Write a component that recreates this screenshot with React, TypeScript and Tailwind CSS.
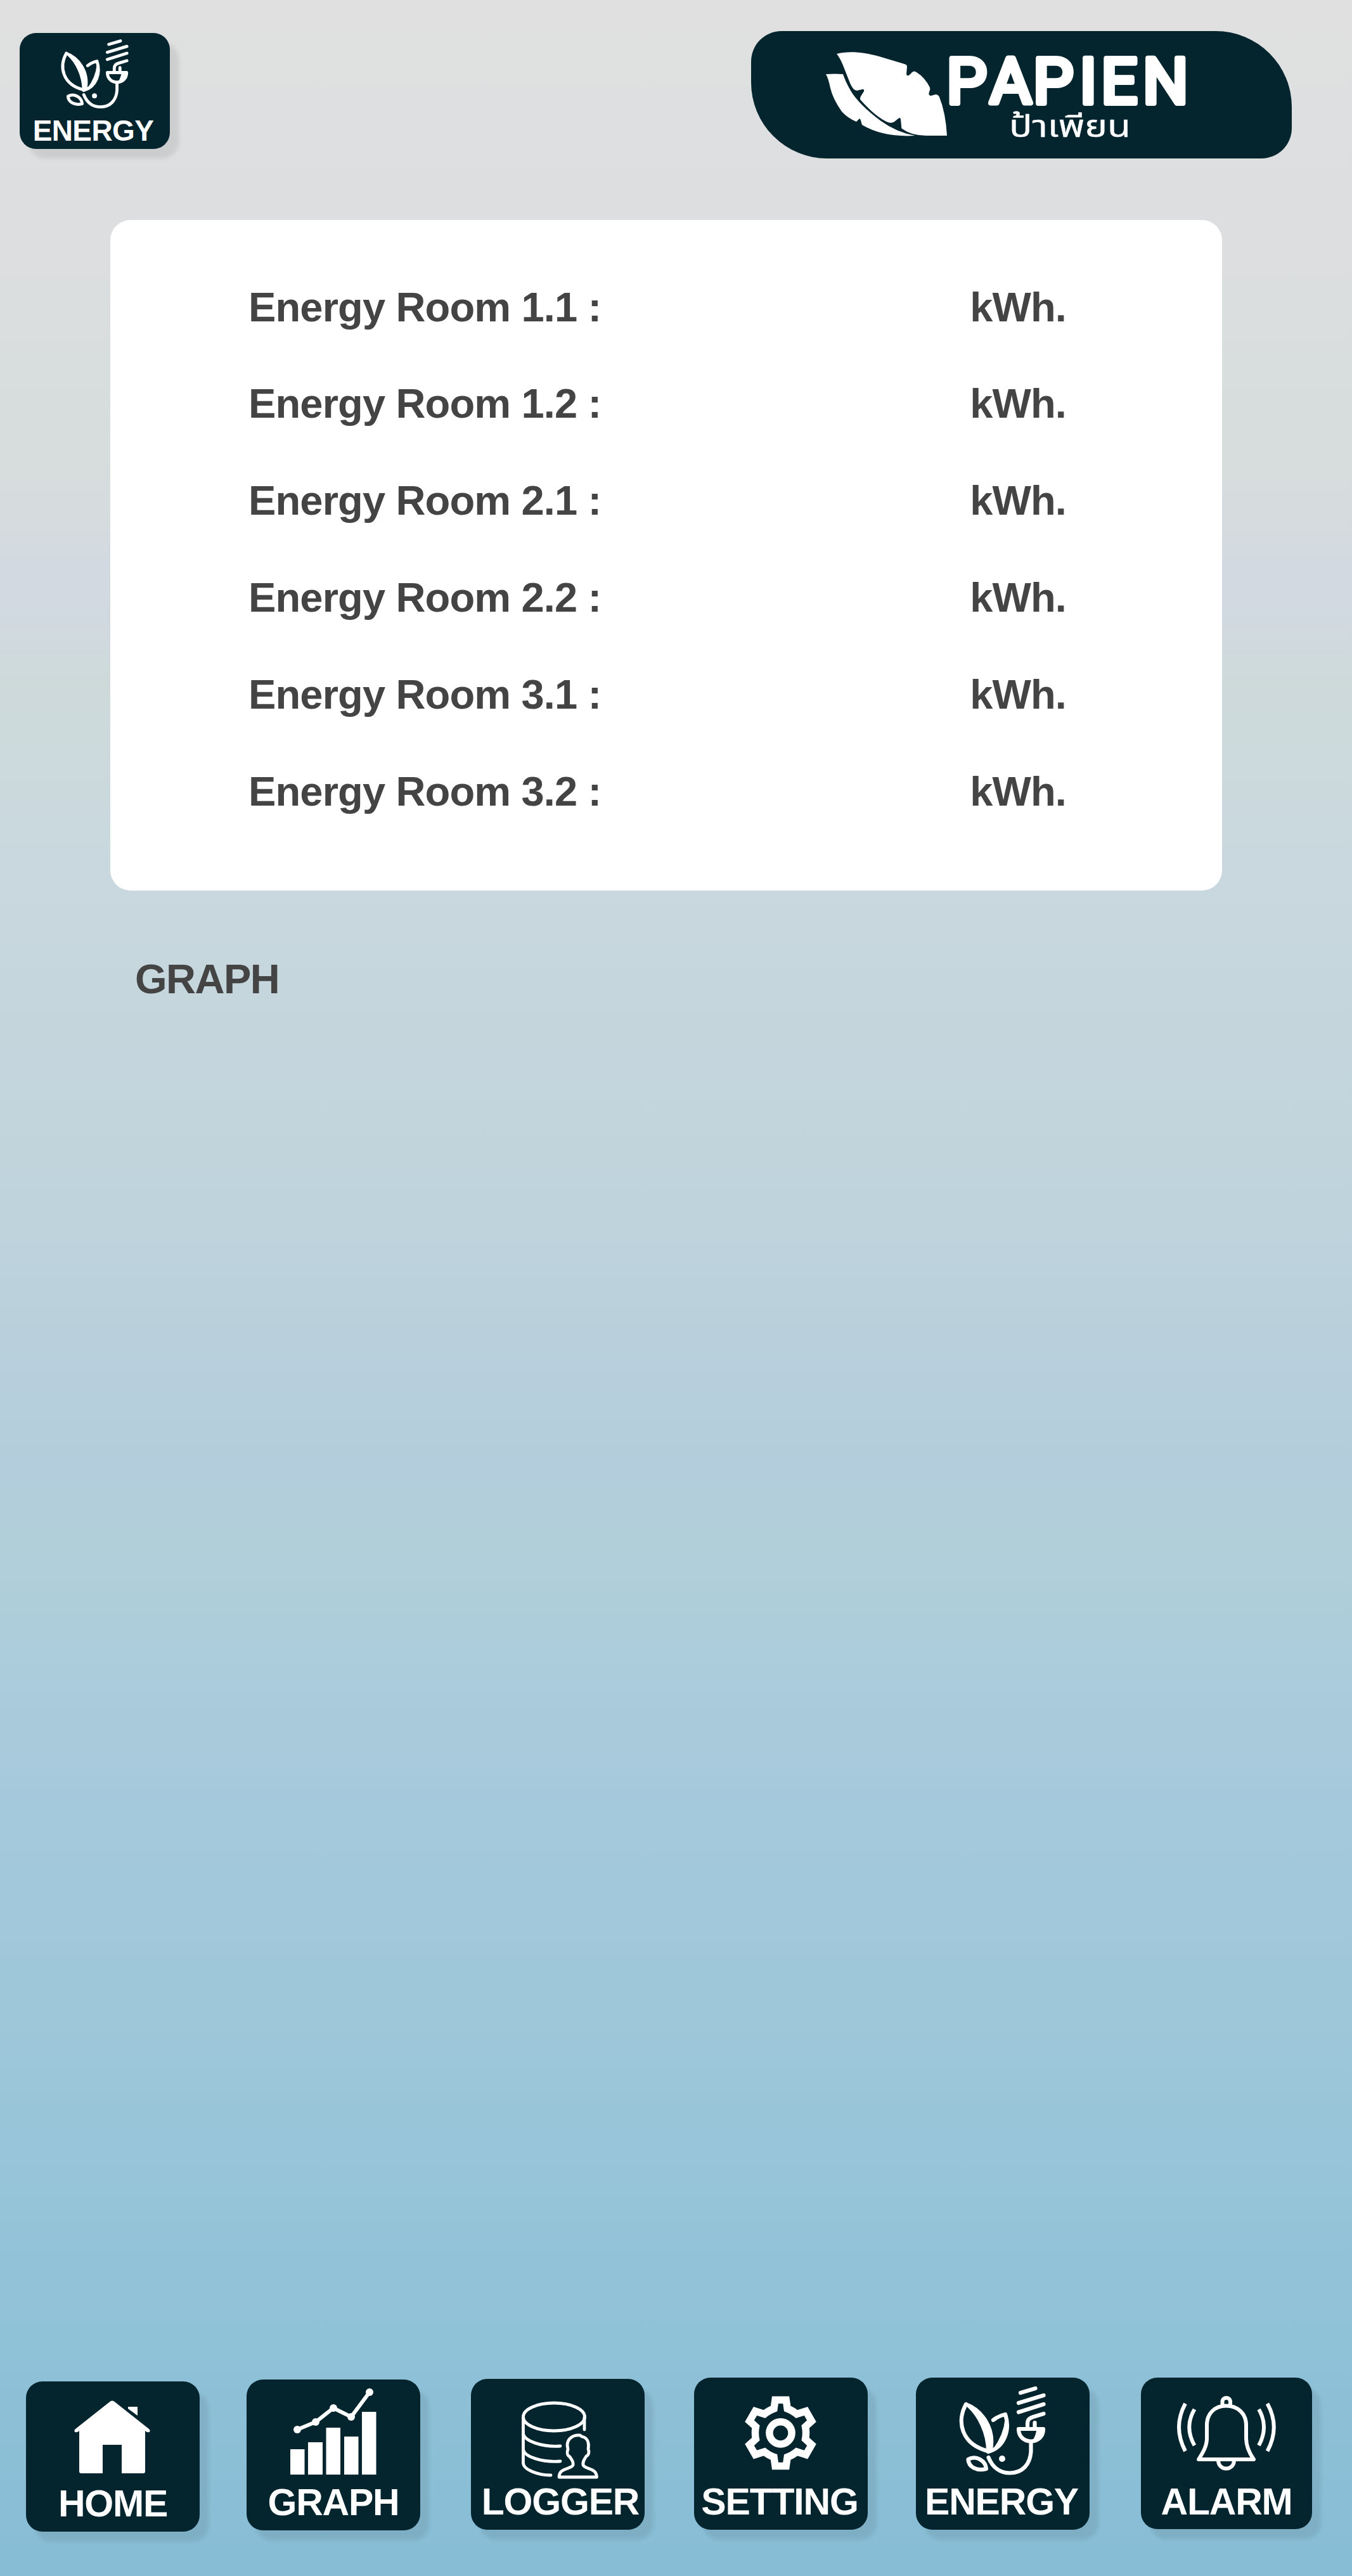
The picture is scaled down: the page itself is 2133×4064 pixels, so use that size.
const navItems = [
  { label: 'HOME', icon: HomeIcon, box: 'ml-[41px] mt-[5px] w-[274px] h-[237px]', pad: 'pb-[1px]' },
  { label: 'GRAPH', icon: GraphIcon, box: 'ml-[74px] mt-[2px] w-[274px] h-[238px]', pad: 'pb-[1px]' },
  { label: 'LOGGER', icon: LoggerIcon, box: 'ml-[80px] mt-[1px] w-[274px] h-[238px]', pad: 'pl-[8px]' },
  { label: 'SETTING', icon: SettingIcon, box: 'ml-[78px] mt-[-1px] w-[274px] h-[240px]', pad: 'pr-[4px]' },
  { label: 'ENERGY', icon: EnergyNavIcon, box: 'ml-[76px] mt-[-1px] w-[274px] h-[240px]', pad: 'pr-[4px]' },
  { label: 'ALARM', icon: AlarmIcon, box: 'ml-[81px] mt-[-1px] w-[270px] h-[239px]', pad: 'pt-[1px]' },
];

const rooms = ['1.1', '1.2', '2.1', '2.2', '3.1', '3.2'];

function HomeIcon() {
  return (
    <svg className="block w-full" viewBox="0 0 274 237" fill="white">
      <path d="M133 31.500Q136 29.500 139 31.500L194 75Q197 78 194.500 80Q191 81 188 78V142Q188 145 185 145H151V100H121V145H87Q84 145 84 142V78Q81 81 77.500 80Q75 78 78 75Z" />
      <path d="M161 40H176V54L161 43Z" />
    </svg>
  );
}

function GraphIcon() {
  return (
    <svg className="block w-full" viewBox="0 0 274 238" fill="white">
      <path d="M69 110H91.500V150H69ZM97 99H120V150H97ZM125.500 76H148V150H125.500ZM154 90H176.500V150H154ZM182 51H204.500V150H182Z" />
      <path d="M80 79L109 67L137 45L165 59L194 20" fill="none" stroke="white" strokeWidth="6" />
      <circle cx="80" cy="79" r="6" />
      <circle cx="109" cy="67" r="6" />
      <circle cx="137" cy="45" r="6" />
      <circle cx="165" cy="59" r="6" />
      <circle cx="194" cy="20" r="6" />
    </svg>
  );
}

function LoggerIcon() {
  return (
    <svg className="block w-full" viewBox="0 0 274 238" fill="none" stroke="white" strokeWidth="4.800" strokeLinecap="round" strokeLinejoin="round">
      <ellipse cx="131" cy="60" rx="48.500" ry="22" />
      <path d="M82.500 60V133C83 143 105 152 126 152M179 60V80" />
      <path d="M82.500 87C85 98 112 108 141 106M82.500 112C85 123 112 132 141 130" />
      <path d="M175 91L172 89C160 88 152 95 152 105L153 111C151 116 152 121 156 123C159 128 162 130 161 136C158 143 139 140 139 155H198.500C198 140 180 143 177 136C176 130 179 127 182 122C186 120 187 115 185 111L185.500 105C185.500 97 181 92 175 91Z" />
    </svg>
  );
}

function SettingIcon() {
  return (
    <svg className="block w-full" viewBox="0 0 274 240" fill="none" stroke="white" strokeWidth="11.500">
      <path d="M128 35.200H145.200L147.200 49Q155.500 52 162 57.600L176.500 53L185.500 68.600L175.600 77.500Q177.500 87 175.600 97L185.500 106L176.500 121.600L162 117Q155.500 122.500 147.200 125.400L145.200 139.500H128L126 125.400Q117.500 122.500 111 117L96.500 121.600L87.500 106L97.400 97Q95.500 87 97.400 77.500L87.500 68.600L96.500 53L111 57.600Q117.500 52 126 49Z" />
      <circle cx="136.500" cy="87.300" r="17.600" />
    </svg>
  );
}

/* Plant with a lightbulb plug, shared by the header badge and the nav tile */
function EnergyDrawing() {
  return (
    <g fill="none" stroke="white" strokeWidth="6.200" strokeLinecap="round" strokeLinejoin="round">
      <path d="M114 116C71 105 64 69 79 42" />
      <path d="M79 40C104 49 127 78 120 114L112 116C112 88 98 60 82 46Z" fill="white" strokeWidth="2" />
      <path d="M122 67Q131 60 141 58C149 82 140 110 114 117" />
      <path d="M141 66C146 84 138 103 122 113Q139 90 141 66Z" fill="white" strokeWidth="1" />
      <path d="M82.500 129C83 141 96 148 111 144C110 131 95 122 82.500 129Z" />
      <path d="M114.500 126C121 142 133 150.500 148 150.500C168 150.500 180 137 181.500 117V103" />
      <path d="M162 81H201C201 107 162 107 162 81Z" />
      <path d="M192 81H201Q200 94 186 99Q191 91 192 81Z" fill="white" strokeWidth="3" />
      <path d="M176 78V73C176 66 179 64 185 62L201.500 57M187.500 79V71" />
      <path d="M165 24L188.500 17M162 40L201.500 28M162 54.500L201.500 42" />
      <circle cx="136" cy="128" r="5" fill="white" stroke="none" />
    </g>
  );
}

function EnergyNavIcon() {
  return (
    <svg className="block w-full" viewBox="0 0 274 240">
      <EnergyDrawing />
    </svg>
  );
}

function AlarmIcon() {
  return (
    <svg className="block w-full" viewBox="0 0 270 239" fill="none" stroke="white" strokeWidth="6" strokeLinejoin="round">
      <path d="M91 129C98 118 104 108 104 96V75C104 57 116 44.500 134.500 44.500S166 57 166 75V96C166 108 171 119 178 129Z" />
      <path d="M128.500 43V38C128.500 30 141 30 141 38V43M122 130C122 148 147 148 147 130" />
      <path d="M84.500 50Q68 78 84.500 107M70 41Q50 78 70 116M186 50Q202 78 186 107M199.500 41Q220 78 199.500 116" />
    </svg>
  );
}

function LeafLogo() {
  return (
    <svg className="mt-[32px] block h-[136px] w-[192px] shrink-0" viewBox="0 0 192 136" fill="white">
      <path d="M17 4C35 -1 60 1 84 8L124 20Q128 21 128 24L127 36Q128 40 132 37L136 33Q139 30 143 33Q156 41 164 57Q165 60 163 64Q161 70 166 70L173 68Q177 68 179 72Q189 97 191 133H158Q135 133 120 122Q119 121 119 118L118 107Q117 103 113 107L108 111Q104 114 98 112Q79 104 55 77Q53 75 55 71L60 63Q61 59 57 60L49 62Q43 62 38 50L27 22Q22 10 17 4Z" />
      <path d="M0 36Q14 35 27 36Q31 48 39 62Q52 84 87 110Q112 128 141 133Q91 136 57 116L55 109Q54 105 52 107L48 111Q34 105 25 95Q11 75 7 58Q4 43 0 36Z" />
    </svg>
  );
}

export default function App() {
  return (
    <div className="flex h-[4064px] w-[2133px] flex-col overflow-hidden bg-[linear-gradient(180deg,#e0e0e0_0%,#dcdee0_10%,#d8dddd_14%,#d6dcdd_20%,#d2d9e1_22%,#d1d9e0_24%,#cedada_26.5%,#cad9de_32%,#c6d6dd_38%,#c1d4dc_45%,#bad1dc_51%,#b3cddc_57%,#b1cfd9_60%,#accddb_64%,#a9cadb_67%,#a5c9dc_70%,#9cc6d9_80%,#91c2d8_89%,#87bdd5_100%)] font-['Liberation_Sans',Arial,sans-serif] font-bold">
      {/* Header */}
      <header className="flex h-[347px] shrink-0 items-start justify-between pl-[31px] pr-[95px]">
        <div className="mt-[52px] h-[183px] w-[237px] rounded-[26px] bg-[#04242e] shadow-[14px_15px_6px_rgba(0,0,0,0.08)]">
          <svg className="block h-[136px] w-full" viewBox="0 0 237 136">
            <g transform="translate(12 -.7) scale(.78)">
              <EnergyDrawing />
            </g>
          </svg>
          <div className="pr-[5px] text-center text-[46px] leading-[36px] tracking-[-0.6px] text-white">ENERGY</div>
        </div>
        <div className="mt-[49px] flex h-[201px] w-[853px] rounded-tl-[48px] rounded-tr-[120px] rounded-br-[48px] rounded-bl-[120px] bg-[#04242e] pl-[118px]">
          <LeafLogo />
          <svg className="block h-[201px] w-[400px] overflow-visible" viewBox="0 0 400 201" fill="white" stroke="white" strokeLinejoin="round">
            <text x="-1.7 66.6 134.7 208 242 307.7" y="114" fontFamily="Roboto, sans-serif" fontWeight="400" fontSize="101" strokeWidth="8">PAPIEN</text>
            <text x="97" y="167" textLength="192" lengthAdjust="spacingAndGlyphs" fontFamily="Noto Sans Thai, DejaVu Sans, sans-serif" fontWeight="400" fontSize="48" strokeWidth=".4">ป้าเพียน</text>
          </svg>
        </div>
      </header>

      {/* Energy readings */}
      <main className="h-[1058px] w-[1754px] shrink-0 ml-[174px] rounded-[32px] bg-white pl-[218px] pr-[246px] pt-[61px] text-[65px] tracking-[-0.85px] text-[#444444]">
        {rooms.map((room) => (
          <div key={room} className="flex h-[152.8px] items-center justify-between">
            <span>Energy Room {room} :</span>
            <span>kWh.</span>
          </div>
        ))}
      </main>

      <h2 className="ml-[213px] mt-[103px] text-[65px] leading-[74px] tracking-[-1.5px] text-[#444444]">GRAPH</h2>

      {/* Bottom navigation */}
      <nav className="mt-auto flex h-[312px] shrink-0 items-start">
        {navItems.map(({ label, icon: Icon, box, pad }) => (
          <div key={label} className={`${box} shrink-0 rounded-[26px] bg-[#04242e] shadow-[14px_16px_6px_rgba(0,0,0,0.08)]`}>
            <Icon />
            <div className={`${pad} -mt-[77px] flex h-[66px] items-center justify-center text-[59px] leading-[66px] tracking-[-1.2px] text-white`}>{label}</div>
          </div>
        ))}
      </nav>
    </div>
  );
}
